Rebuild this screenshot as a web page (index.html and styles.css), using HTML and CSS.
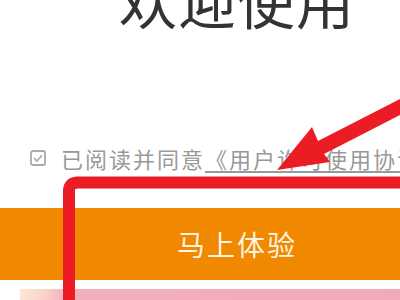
FILE: index.html
```html
<!DOCTYPE html>
<html lang="zh-CN">
<head>
<meta charset="utf-8">
<title>欢迎使用</title>
<link rel="stylesheet" href="styles.css">
</head>
<body>
<div class="page">
  <h1 class="title">欢迎使用</h1>
  <div class="agree">
    <svg class="check" width="16" height="16" viewBox="0 0 16 16">
      <rect x="1" y="1" width="14" height="14" rx="1.8" fill="none" stroke="#aaaaaa" stroke-width="1.8"/>
      <path d="M4 8.2 L6.9 11 L12 5.2" fill="none" stroke="#aaaaaa" stroke-width="1.7"/>
    </svg>
    <span class="agree-text">已阅读并同意<span class="link">《用户许可使用协议》</span></span>
  </div>
  <div class="btn">马上体验</div>
  <div class="pink"></div>
  <svg class="annot" width="400" height="300" viewBox="0 0 400 300">
    <path d="M69 320 V191 Q69 182.5 78 182.5 H420" fill="none" stroke="#ec1c24" stroke-width="12"/>
    <polygon points="410,94 318,141 312,127 277,170 330,162 324,154 410,110" fill="#ec1c24"/>
  </svg>
</div>
</body>
</html>
```
FILE: styles.css
```css
html, body {
  margin: 0;
  padding: 0;
  background: #ffffff;
}
.page {
  position: relative;
  width: 400px;
  height: 300px;
  overflow: hidden;
  font-family: "Noto Sans CJK SC", "Noto Sans", sans-serif;
}
.title {
  margin: -36px 0 0 0;
  padding-left: 74px;
  text-align: center;
  font-size: 58px;
  font-weight: 400;
  line-height: 70px;
  letter-spacing: 1px;
  color: #333333;
}
.agree {
  display: flex;
  align-items: center;
  gap: 15px;
  margin-top: 112px;
  padding-left: 30px;
  height: 24px;
}
.check {
  flex: none;
}
.agree-text {
  font-size: 22px;
  line-height: 24px;
  letter-spacing: 2px;
  color: #999999;
  white-space: nowrap;
}
.link {
  text-decoration: underline;
  text-underline-offset: 3px;
}
.btn {
  margin-top: 38px;
  height: 72px;
  background: #f08800;
  color: #fff3e4;
  font-size: 28px;
  letter-spacing: 2px;
  line-height: 72px;
  text-align: center;
  padding-left: 74px;
}
.pink {
  margin: 9px 0 0 20px;
  height: 20px;
  background: linear-gradient(to right, #fde6d6 0px, #f9d2c8 25px, #f2b0bd 45px, #f1aab8 100%);
}
.annot {
  position: absolute;
  left: 0;
  top: 0;
}
```
